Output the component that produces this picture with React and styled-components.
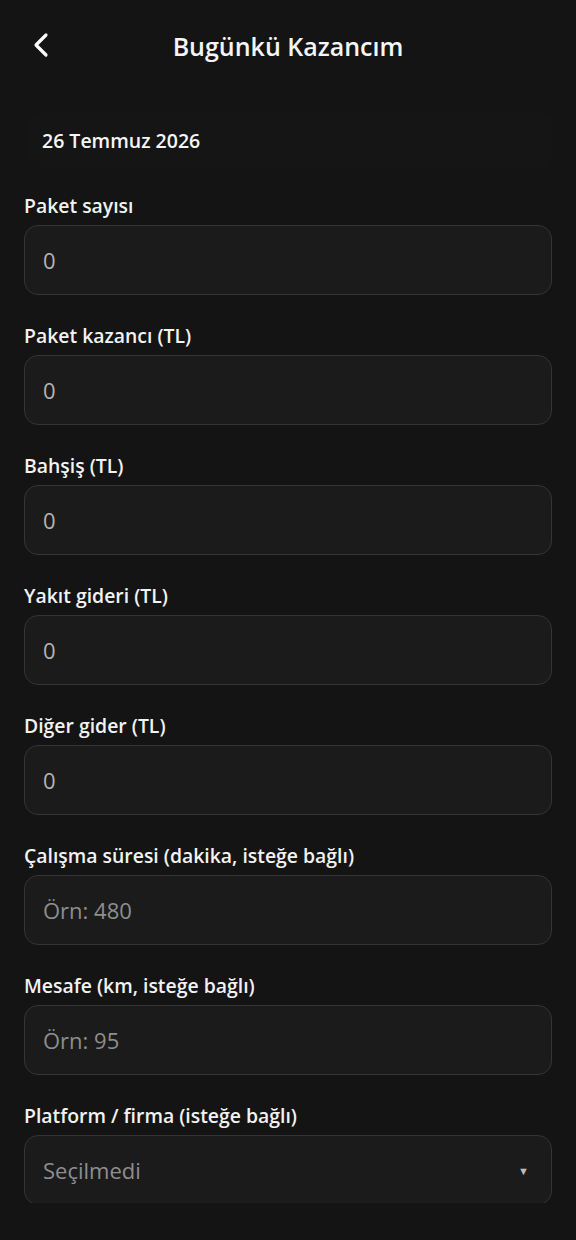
import React from "react";
import styled, { createGlobalStyle } from "styled-components";

const GlobalStyle = createGlobalStyle`
  html, body {
    margin: 0;
    padding: 0;
    background: #141414;
  }
  body {
    font-family: "Open Sans", "Noto Sans", sans-serif;
    color: #f2f2f2;
  }
  * { box-sizing: border-box; }
`;

const Screen = styled.div`
  width: 576px;
  height: 1240px;
  background: #141414;
  display: flex;
  flex-direction: column;
  overflow: hidden;
`;

const Header = styled.header`
  height: 92px;
  flex-shrink: 0;
  display: flex;
  align-items: center;
  position: relative;
  justify-content: center;
`;

const BackButton = styled.button`
  position: absolute;
  left: 21px;
  top: 25px;
  width: 40px;
  height: 40px;
  border: none;
  background: transparent;
  padding: 0;
  display: flex;
  align-items: center;
  justify-content: center;
  cursor: pointer;
`;

const Title = styled.h1`
  margin: 0;
  font-size: 25px;
  font-weight: 600;
  color: #f5f5f5;
`;

const Scroll = styled.div`
  height: 1111px;
  overflow: hidden;
  padding: 20px 24px 0;
`;

const DateCard = styled.div`
  height: 56px;
  margin: 0 0 26px 4px;
  padding: 0 14px;
  display: flex;
  align-items: center;
  border-radius: 12px;
  background: #151515;
  font-size: 19.5px;
  font-weight: 600;
  color: #f5f5f5;
`;

const Field = styled.div`
  display: flex;
  flex-direction: column;
  gap: 7px;
  margin-bottom: 29px;
`;

const Label = styled.label`
  font-size: 19.4px;
  line-height: 24px;
  font-weight: 600;
  color: #f2f2f2;
`;

const Input = styled.input`
  height: 70px;
  width: 100%;
  padding: 0 18px;
  border-radius: 14px;
  border: 1.5px solid #353535;
  background: #1b1b1b;
  color: #b4b4b4;
  font-family: "Open Sans", "Noto Sans", sans-serif;
  font-size: 22px;
  outline: none;
  &::placeholder {
    color: #8e8e8e;
  }
`;

const Select = styled.div`
  height: 70px;
  width: 100%;
  padding: 0 22px 0 18px;
  border-radius: 14px;
  border: 1.5px solid #353535;
  background: #1b1b1b;
  display: flex;
  align-items: center;
  justify-content: space-between;
  font-size: 22px;
  color: #8e8e8e;
`;

const Caret = styled.span`
  font-size: 11px;
  color: #bdbdbd;
`;

const fields = [
  { label: "Paket sayısı", value: "0" },
  { label: "Paket kazancı (TL)", value: "0" },
  { label: "Bahşiş (TL)", value: "0" },
  { label: "Yakıt gideri (TL)", value: "0" },
  { label: "Diğer gider (TL)", value: "0" },
  { label: "Çalışma süresi (dakika, isteğe bağlı)", placeholder: "Örn: 480" },
  { label: "Mesafe (km, isteğe bağlı)", placeholder: "Örn: 95" },
];

const App = () => {
  return (
    <>
      <GlobalStyle />
      <Screen>
        <Header>
          <BackButton aria-label="Geri">
            <svg width="24" height="28" viewBox="0 0 24 28">
              <polyline
                points="17,4 7,14 17,24"
                fill="none"
                stroke="#ffffff"
                strokeWidth="3.2"
                strokeLinecap="round"
                strokeLinejoin="round"
              />
            </svg>
          </BackButton>
          <Title>Bugünkü Kazancım</Title>
        </Header>
        <Scroll>
          <DateCard>26 Temmuz 2026</DateCard>
          {fields.map((f) => (
            <Field key={f.label}>
              <Label>{f.label}</Label>
              <Input
                readOnly
                defaultValue={f.value}
                placeholder={f.placeholder}
              />
            </Field>
          ))}
          <Field>
            <Label>Platform / firma (isteğe bağlı)</Label>
            <Select>
              <span>Seçilmedi</span>
              <Caret>▼</Caret>
            </Select>
          </Field>
        </Scroll>
      </Screen>
    </>
  );
};

export default App;
